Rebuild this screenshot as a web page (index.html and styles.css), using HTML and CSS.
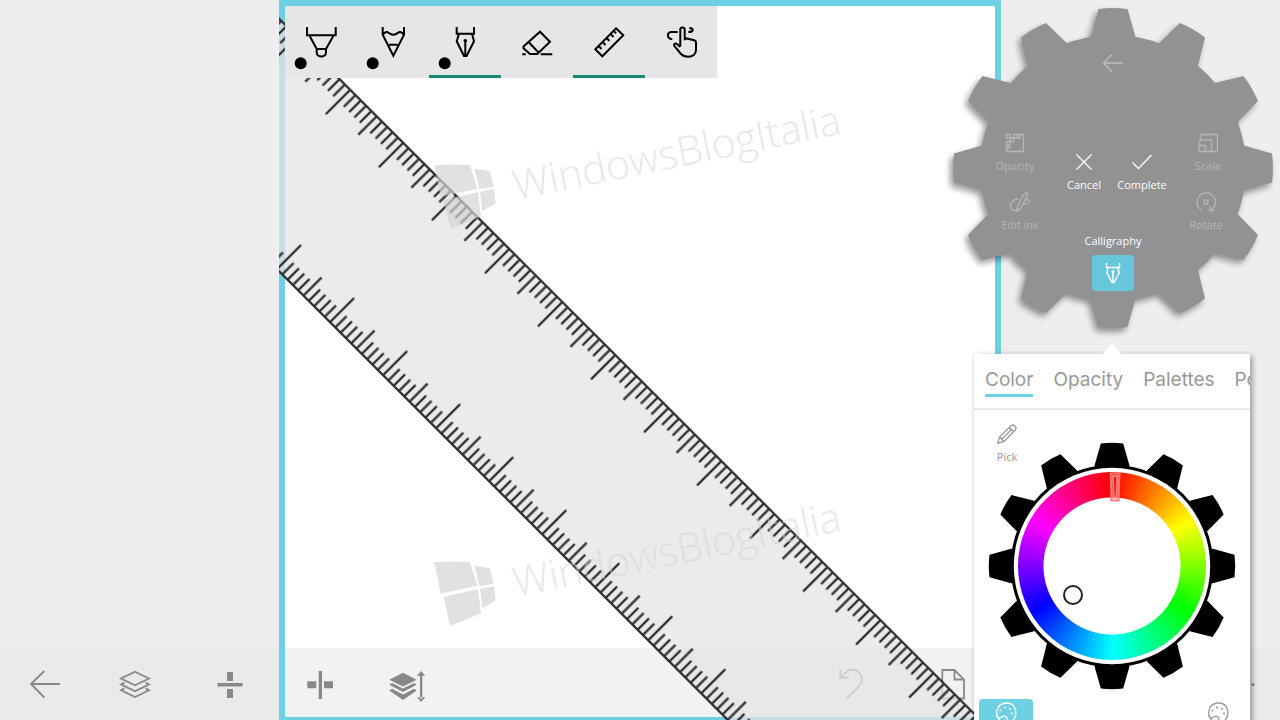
FILE: index.html
```html
<!DOCTYPE html>
<html lang="en">
<head>
<meta charset="UTF-8">
<meta name="viewport" content="width=device-width, initial-scale=1.0">
<title>Sketch</title>
<link rel="stylesheet" href="styles.css">
</head>
<body>
  <main class="workspace">
    <section class="canvas">
      <div class="toolbar">
        <button class="ink-tool" aria-label="Ballpoint pen">
          <svg viewBox="0 0 72 72"><path d="M22 21v8.3h28.7V21M24.3 29.3 31.7 43H41l7.7-13.7M31.7 43v3.5c0 5.2 9.3 5.2 9.3 0V43"/><circle class="ink-dot" cx="15.7" cy="57.3" r="6"/></svg>
        </button>
        <button class="ink-tool" aria-label="Pencil">
          <svg viewBox="0 0 72 72"><path d="M25.7 21v7.7l10.6 21L47 28.7V21M25.7 28.7c2-2.5 4-3.6 6-1.8 3 2.4 6.2 2.4 9.2 0 2-1.8 4-.7 6.1 1.8M32 38.7h8.700"/><circle class="ink-dot" cx="15.7" cy="57.3" r="6"/></svg>
        </button>
        <button class="ink-tool active" aria-label="Calligraphy pen">
          <svg viewBox="0 0 72 72"><path d="M27.7 21v6.700H45V21M30 27.7l-2.300 7.600L35 50h2.600L45 35.300l-2-7.600M36.300 35v15"/><circle class="ink-dot" cx="36.3" cy="34.7" r="1.8"/><circle class="ink-dot" cx="15.7" cy="57.3" r="6"/></svg>
        </button>
        <button class="ink-tool" aria-label="Eraser">
          <svg viewBox="0 0 72 72"><path d="M39 25.7l10 10L36.3 48H29l-6.500-5.800v-1.800zM28.3 36.7 38 47M21.3 48.3h3.400M39.7 48.3h11.600"/></svg>
        </button>
        <button class="ink-tool active" aria-label="Ruler">
          <svg viewBox="0 0 72 72"><path d="M43 22.3l7.300 7L29.3 50.3l-7-7zM25.5 40l3 3M29.5 36l3 3M33.5 32l3 3M37.5 28l3 3M40.5 24.8l2.600 2.600"/></svg>
        </button>
        <button class="ink-tool" aria-label="Touch writing">
          <svg viewBox="0 0 72 72"><path d="M35.3 40.5V23.6c0-2.900 4.400-2.900 4.400 0v10.600M39.7 32l9.500 2.200c1.300.3 1.800 1 1.800 2.200V44c0 4.500-3.600 6.700-7.700 6.700-3.400 0-5.600-.7-7.300-2.700l-6.500-7.800c-1.300-2.300 1-3.400 2.600-2.200l3.200 2.900M27.3 33.3c-5.500-.6-6.200-7.300-.6-7.300h6M43.3 26c5.600 0 5.800-4 1-4"/></svg>
        </button>
      </div>

      <!-- frame, ruler and watermarks sit above the bottom bar -->
      <div class="frame">
        <svg class="overlay" aria-hidden="true">
          <defs>
            <pattern id="ticks" width="75" height="179" patternUnits="userSpaceOnUse">
              <path d="M0 0v34.500M75 0v34.500M37.500 0v26M7.500 0v16.500M15 0v16.500M22.500 0v16.500M30 0v16.500M45 0v16.500M52.500 0v16.500M60 0v16.500M67.500 0v16.500M0 179v-34.500M75 179v-34.500M37.500 179v-26M7.500 179v-16.500M15 179v-16.500M22.500 179v-16.500M30 179v-16.500M45 179v-16.500M52.500 179v-16.500M60 179v-16.500M67.500 179v-16.500" stroke="#2b2b2b" stroke-width="2.300"/>
            </pattern>
            <g id="mark">
              <path d="M43 247q55-4 107-1l22 71-110 24zM163 257l47 8 11 46-43 7zM71 350l103-22 9 72-93 38zM180 326l42-8 5 43-40 24z" transform="scale(.3333)"/>
              <text x="96" y="117" transform="rotate(-11.500 96 117)">WindowsBlogItalia</text>
            </g>
          </defs>
          <g transform="translate(71.200 89.800) rotate(45)">
            <rect class="ruler-body" x="-750" width="2250" height="179"/>
            <rect x="-750" width="2250" height="179" fill="url(#ticks)"/>
            <path d="M-750 0h2250M-750 178.500h2250" stroke="#333" stroke-width="2.200"/>
          </g>
          <use class="watermark" href="#mark" x="141" y="83"/>
          <use class="watermark" href="#mark" x="141" y="480"/>
        </svg>
      </div>
    </section>
  </main>

  <footer class="bottom-bar">
    <button class="bar-btn" aria-label="Back">
      <svg viewBox="0 0 36 36"><path d="M3.700 18H33M17.300 5 4 18l13.300 13.500"/></svg>
    </button>
    <button class="bar-btn" aria-label="Layers">
      <svg viewBox="0 0 36 36"><path d="M18 5.700l14 6.800-14 6.800-14-6.800zM7.500 16.500 4 18.400l14 6.800 14-6.800-3.500-1.900M7.500 22.400 4 24.300l14 6.800 14-6.800-3.500-1.900"/></svg>
    </button>
    <button class="bar-btn solid" aria-label="Flip vertical">
      <svg viewBox="0 0 36 36"><path d="M15 6h6v9h-6zM5.500 17h25v3.400h-25zM15 23h6v9h-6z"/></svg>
    </button>
    <button class="bar-btn solid" aria-label="Flip horizontal">
      <svg viewBox="0 0 36 36"><path d="M5.300 15.300h9v7h-9zM16.700 5H20v28h-3.300zM22 15.300h9v7h-9z"/></svg>
    </button>
    <button class="bar-btn solid wide" aria-label="Layer order">
      <svg viewBox="0 0 40 36"><path d="M16 6.700l13.700 7L16 20.500l-13.700-6.800zM5 17l11 5.600L27 17l2.700 1.700L16 26 2.300 18.700zM5 22.800l11 5.600 11-5.600 2.700 1.700L16 34 2.300 24.500zM33 8.500h2.300v24H33zM34.100 5l4.200 4.700h-8.400zM34.100 36l4.200-4.700h-8.400z"/></svg>
    </button>
    <button class="bar-btn undo" aria-label="Undo">
      <svg viewBox="0 0 36 36"><path d="M8.300 3.300v8.400H17M8.300 11.700l5-5c4-4.500 11-3.700 14.200.3 3.500 4.300 3.300 9.500-.5 13.300L14.700 32.300"/></svg>
    </button>
    <button class="bar-btn" aria-label="New page">
      <svg viewBox="0 0 36 36"><path d="M8.300 4H20.500L30 13.500v19H8.300zM20.500 4v9.500H30"/></svg>
    </button>
    <button class="bar-btn solid more" aria-label="More">
      <svg viewBox="0 0 36 36"><circle cx="5" cy="18.500" r="1.500"/><circle cx="18" cy="18.500" r="1.500"/><circle cx="31" cy="18.500" r="1.500"/></svg>
    </button>
  </footer>

  <nav class="gear-menu">
    <svg class="gear-shape" viewBox="-161 -161 322 322" aria-hidden="true">
      <defs>
        <path id="tooth" d="M-22.500-131-14.500-159q14.500-2 29 0l8 28v10h-45z"/>
        <g id="teeth">
          <use href="#tooth"/>
          <use href="#tooth" transform="rotate(30)"/>
          <use href="#tooth" transform="rotate(60)"/>
          <use href="#tooth" transform="rotate(90)"/>
          <use href="#tooth" transform="rotate(120)"/>
          <use href="#tooth" transform="rotate(150)"/>
          <use href="#tooth" transform="rotate(180)"/>
          <use href="#tooth" transform="rotate(210)"/>
          <use href="#tooth" transform="rotate(240)"/>
          <use href="#tooth" transform="rotate(270)"/>
          <use href="#tooth" transform="rotate(300)"/>
          <use href="#tooth" transform="rotate(330)"/>
        </g>
      </defs>
      <use href="#teeth"/>
      <circle r="133"/>
    </svg>
    <button class="gear-back" aria-label="Back">
      <svg viewBox="0 0 20 20"><path d="M.5 10H20M9 1.500.5 10 9 18.500"/></svg>
    </button>
    <div class="gear-tools">
      <div class="side side-left">
        <button class="gear-tool narrow">
          <svg viewBox="0 0 20 20"><path d="M12 1.500h6.500v17h-17V12M1.500 1.500H5V5H1.500zM5 5h3.500v3.500H5zM8.500 1.500H12V5H8.500zM1.500 8.500H5V12H1.500zM1.500 15H5v-3M12 5h3V1.500"/></svg>
          Opacity
        </button>
        <button class="gear-tool">
          <svg viewBox="0 0 20 20"><path d="M15.500.8c2-.5 2.500 1 1.800 2.800L11 16l-3.500 3.500L7.300 15 13 3.500zM8.500 7C3 7 0 11 .6 15c.6 4 4.500 4.300 6.600 2.500M15 8c3-1 4.500 0 4.400 1.500-.2 2-3 1.800-5.800 2.500"/></svg>
          Edit ink
        </button>
      </div>
      <div class="actions">
        <button class="gear-tool bright">
          <svg viewBox="0 0 20 20"><path d="M2.500 2.500l15 15M17.500 2.500l-15 15"/></svg>
          Cancel
        </button>
        <button class="gear-tool bright">
          <svg viewBox="0 0 20 20"><path d="M.5 10.500l6 6L19.500 3"/></svg>
          Complete
        </button>
      </div>
      <div class="side side-right">
        <button class="gear-tool medium">
          <svg viewBox="0 0 20 20"><path d="M2.500 7V1.500h17v17H14M1.800 12V7H13.500v11.500H8M1 12.500h6.500v6H1z"/></svg>
          Scale
        </button>
        <button class="gear-tool">
          <svg viewBox="0 0 20 20"><path d="M6 18.200A9.200 9.200 0 1 1 14 18.400M14 14v4.600h4.800"/><circle cx="10" cy="10" r="2"/></svg>
          Rotate
        </button>
      </div>
    </div>
    <label class="pen-label" for="pen">Calligraphy</label>
    <button class="pen-btn" id="pen">
      <svg viewBox="0 0 20 22"><path d="M3.500 1v4.500h13V1M5 5.500 4 11l5 9.500h2l5-9.500-1-5.500M10 10v10.500"/><circle cx="10" cy="9.500" r=".8"/></svg>
    </button>
  </nav>

  <aside class="panel">
    <div class="tabs">
      <button class="tab selected">Color</button>
      <button class="tab">Opacity</button>
      <button class="tab">Palettes</button>
      <button class="tab">Popular</button>
    </div>
    <div class="picker">
      <button class="pick">
        <svg viewBox="0 0 20 20"><path d="M.8 19.200 2.500 13 14 1.800c2.500-2.300 6.500 1.500 4.200 4.200L7 17.500zM2.500 13l4.500 4.500M12.300 3.500l4.300 4.300M15 5 4.700 15.200"/></svg>
        Pick
      </button>
      <div class="wheel">
        <svg class="wheel-gear" viewBox="-161 -161 322 322" aria-hidden="true">
          <use href="#teeth"/>
          <circle r="131.500"/>
          <circle r="127.500" fill="#fff"/>
        </svg>
        <div class="hue-ring"></div>
        <button class="hue-handle" aria-label="Hue">
          <svg viewBox="0 0 12 30"><path d="M1.700 1.500h8.800L9.500 28.500h-7zM4 4h4.200L7.500 25.500H4.700z"/></svg>
        </button>
        <button class="shade-handle" aria-label="Shade"></button>
      </div>
    </div>
    <div class="panel-modes">
      <button class="mode selected" aria-label="Wheel">
        <svg viewBox="0 0 22 22"><path d="M7 20C-1 15 0 2 11 1c8-.4 11 6.500 9.500 12.500-.8 4-4.500 7-9 7.500-1.700-.3 1.300-2.500.3-5-1-2.300-3.800-2.200-5.300-.8C5 16.500 2.500 15.500 1.300 13.500"/><circle cx="5.500" cy="8.500" r="1.100"/><circle cx="10" cy="5.500" r="1.100"/><circle cx="15" cy="7" r="1.100"/><circle cx="17" cy="11.500" r="1.100"/></svg>
      </button>
      <button class="mode" aria-label="Mixer">
        <svg viewBox="0 0 22 22"><path d="M7 20C-1 15 0 2 11 1c8-.4 11 6.500 9.500 12.500-.8 4-4.500 7-9 7.500-1.700-.3 1.300-2.500.3-5-1-2.300-3.800-2.200-5.300-.8C5 16.500 2.500 15.500 1.300 13.500"/><circle cx="5.500" cy="8.500" r="1.100"/><circle cx="10" cy="5.500" r="1.100"/><circle cx="15" cy="7" r="1.100"/><circle cx="17" cy="11.500" r="1.100"/></svg>
      </button>
    </div>
  </aside>
</body>
</html>
```

FILE: styles.css
```css
:root {
  --accent: #6dd0e5;
  --gear: #919294;
  --icon: #888;
  --green: #138970;
}

* {
  margin: 0;
  padding: 0;
  box-sizing: border-box;
}

body {
  position: relative;
  min-height: 100vh;
  overflow: hidden;
  background: #eee;
  font-family: 'Open Sans', 'Noto Sans', sans-serif;
  font-size: 11px;
}

button {
  border: 0;
  background: none;
  font: inherit;
  color: inherit;
}

svg {
  display: block;
  fill: none;
  stroke: currentColor;
}

/* Canvas */
.workspace {
  display: grid;
  grid-template-columns: 279px 1fr 279px;
  min-height: 100vh;
}

.canvas {
  grid-column: 2;
  position: relative;
  padding: 6px;
  background: #fff;
}

.frame {
  position: absolute;
  inset: 0;
  z-index: 2;
  border: 6px solid var(--accent);
  border-bottom-width: 3px;
  pointer-events: none;
}

.overlay {
  position: absolute;
  top: -6px;
  left: -6px;
  width: calc(100% + 12px);
  height: 100vh;
  overflow: hidden;
}

.ruler-body {
  fill: rgba(228, 228, 228, 0.74);
  stroke: none;
}

.watermark {
  fill: rgba(212, 212, 212, 0.7);
  stroke: none;
  font-family: 'Open Sans', sans-serif;
  font-size: 41px;
  font-weight: 300;
}

#mark text {
  fill: rgba(212, 212, 212, 0.55);
}

/* Ink toolbar */
.toolbar {
  position: relative;
  z-index: 3;
  display: flex;
  width: fit-content;
  background: #e6e6e6;
}

.ink-tool {
  width: 72px;
  height: 72px;
  color: #000;
}

.ink-tool svg {
  width: 72px;
  height: 72px;
  stroke-width: 2;
}

.ink-tool.active {
  box-shadow: inset 0 -3px var(--green);
}

.ink-dot {
  fill: #000;
  stroke: none;
}

/* Bottom bar */
.bottom-bar {
  position: absolute;
  left: 0;
  right: 0;
  bottom: 0;
  z-index: 1;
  display: grid;
  grid-template-columns: 90px 90px 100px 80px 94px 1fr 102px 102px 197px 80px;
  align-items: center;
  justify-items: center;
  height: 72px;
  background: rgba(230, 230, 230, 0.53);
  color: var(--icon);
}

.bar-btn svg {
  width: 36px;
  height: 36px;
  stroke-width: 1.8;
}

.bar-btn.wide svg {
  width: 40px;
}

.bar-btn.solid svg {
  fill: currentColor;
  stroke: none;
}

.bar-btn.undo {
  grid-column: 7;
}

.bar-btn.more {
  grid-column: 10;
}

/* Gear menu */
.gear-menu {
  position: absolute;
  top: 7px;
  right: 6px;
  z-index: 4;
  display: flex;
  flex-direction: column;
  align-items: center;
  width: 322px;
  height: 322px;
  padding: 46px 38px 0;
  line-height: 16px;
  color: #fff;
}

.gear-shape {
  position: absolute;
  inset: 0;
  z-index: -1;
  overflow: visible;
  fill: var(--gear);
  stroke: none;
  filter: drop-shadow(-3px 4px 3px rgba(0, 0, 0, 0.4));
}

.gear-back {
  margin-bottom: 60px;
  color: #bdbebf;
}

.gear-back svg,
.gear-tool svg {
  width: 20px;
  height: 20px;
  stroke-width: 1.3;
}

.gear-tools {
  display: grid;
  grid-template-columns: 64px 116px 64px;
}

.side {
  display: flex;
  flex-direction: column;
  gap: 18px;
  color: #b5b6b7;
}

.side-left {
  align-items: flex-start;
}

.side-right {
  align-items: flex-end;
}

.actions {
  display: flex;
  align-items: flex-start;
  padding-top: 19px;
}

.gear-tool {
  display: flex;
  flex-direction: column;
  align-items: center;
  gap: 5px;
  width: 58px;
  white-space: nowrap;
}

.gear-tool.narrow {
  width: 48px;
}

.gear-tool.medium {
  width: 54px;
}

.pen-btn {
  display: flex;
  align-items: center;
  justify-content: center;
  width: 42px;
  height: 36px;
  margin-top: 6px;
  border-radius: 4px;
  background: #66c6dc;
}

.pen-btn svg {
  width: 20px;
  height: 22px;
  stroke-width: 1.5;
}

/* Color panel */
.panel {
  position: absolute;
  top: 354px;
  right: 30px;
  z-index: 5;
  width: 276px;
  background: #fff;
  box-shadow: 2px 2px 6px rgba(0, 0, 0, 0.4);
  color: #999;
}

.panel::before {
  content: '';
  position: absolute;
  top: -11px;
  left: 129px;
  border: 9px solid transparent;
  border-top: 0;
  border-bottom: 11px solid #fff;
}

.tabs {
  display: flex;
  gap: 20px;
  overflow: hidden;
  padding: 12px 0 11px 11px;
  border-bottom: 2px solid #eaeaea;
  font-family: Inter, sans-serif;
  font-size: 19px;
  line-height: 28px;
}

.tab {
  flex: none;
  border-bottom: 3px solid transparent;
}

.tab.selected {
  border-bottom-color: var(--accent);
}

.picker {
  display: flex;
  flex-direction: column;
  align-items: center;
  padding-top: 14px;
}

.pick {
  display: flex;
  flex-direction: column;
  align-items: center;
  align-self: flex-start;
  gap: 5px;
  width: 66px;
  height: 18px;
  line-height: 16px;
}

.pick svg {
  width: 20px;
  height: 20px;
  flex: none;
  stroke-width: 1.3;
}

.wheel {
  position: relative;
  display: grid;
  place-items: center;
  width: 248px;
  height: 248px;
}

.wheel-gear {
  grid-area: 1 / 1;
  width: 248px;
  height: 248px;
  fill: #000;
  stroke: none;
}

.hue-ring {
  grid-area: 1 / 1;
  width: 188px;
  height: 188px;
  border-radius: 50%;
  background:
    radial-gradient(circle, #fff 68px, transparent 69px),
    conic-gradient(red, yellow, lime, cyan, blue, magenta, red);
}

.hue-handle {
  position: absolute;
  top: 30px;
  left: 121px;
  color: #ff7a7a;
}

.hue-handle svg {
  width: 12px;
  height: 30px;
  stroke-width: 2;
}

.shade-handle {
  position: absolute;
  top: 143px;
  left: 75px;
  width: 20px;
  height: 20px;
  border: 2px solid #222;
  border-radius: 50%;
}

.panel-modes {
  display: flex;
  justify-content: space-between;
  padding: 9px 5px 0;
}

.mode {
  display: flex;
  justify-content: center;
  width: 54px;
  height: 36px;
  padding-top: 3px;
  border-radius: 4px;
}

.mode.selected {
  background: var(--accent);
  color: #fff;
}

.mode svg {
  width: 22px;
  height: 22px;
  stroke-width: 1.3;
}

.mode circle {
  fill: currentColor;
  stroke: none;
}
```
